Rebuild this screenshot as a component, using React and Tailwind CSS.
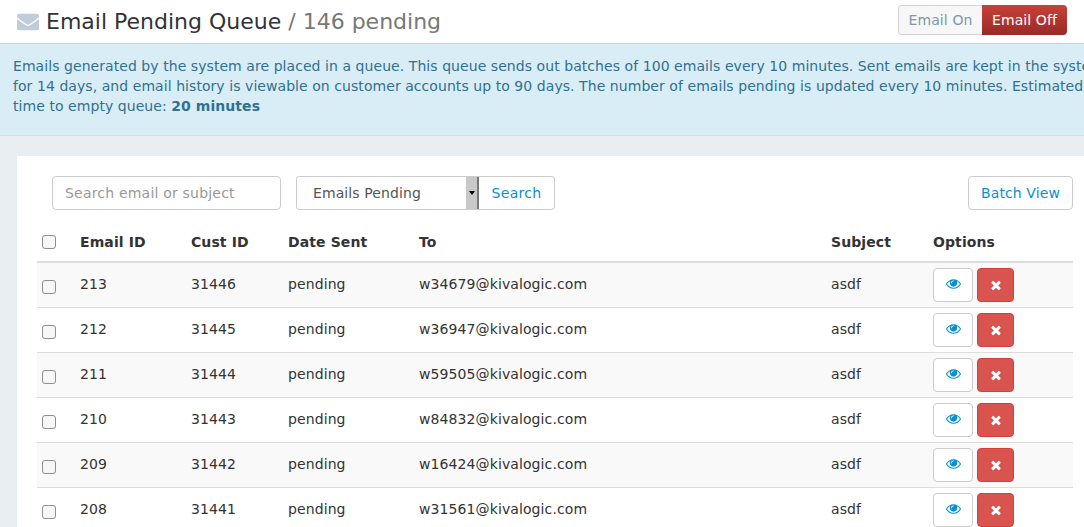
import React from 'react';
import { FaEnvelope } from 'react-icons/fa';

const emails = [
    { id: 213, cust: 31446, to: 'w34679@kivalogic.com' },
    { id: 212, cust: 31445, to: 'w36947@kivalogic.com' },
    { id: 211, cust: 31444, to: 'w59505@kivalogic.com' },
    { id: 210, cust: 31443, to: 'w84832@kivalogic.com' },
    { id: 209, cust: 31442, to: 'w16424@kivalogic.com' },
    { id: 208, cust: 31441, to: 'w31561@kivalogic.com' },
];

const Check = ({ className = '' }) => (
    <input type="checkbox" className={`block appearance-none w-[14px] h-[14px] rounded-[3px] border border-[#8f8f8f] bg-[#f7f7f7] ${className}`} />
);

const EyeIcon = () => (
    <svg viewBox="0 0 1792 1792" className="w-[15px] h-[15px] mb-[2px]" fill="currentColor">
        <path d="M1664 960q-152-236-381-353 61 104 61 225 0 185-131.5 316.5t-316.5 131.5-316.5-131.5-131.5-316.5q0-121 61-225-229 117-381 353 133 205 333.5 326.5t434.5 121.5 434.5-121.5 333.5-326.5zm-720-384q0-20-14-34t-34-14q-125 0-214.5 89.5t-89.5 214.5q0 20 14 34t34 14 34-14 14-34q0-86 61-147t147-61q20 0 34-14t14-34zm848 384q0 34-20 69-140 230-376.5 368.5t-499.5 138.5-499.5-139-376.5-368q-20-35-20-69t20-69q140-229 376.5-368t499.5-139 499.5 139 376.5 368q20 35 20 69z" />
    </svg>
);

const RemoveIcon = () => (
    <svg viewBox="0 0 1792 1792" className="w-[14px] h-[14px]" fill="currentColor">
        <path d="M1490 1322q0 40-28 68l-136 136q-28 28-68 28t-68-28l-294-294-294 294q-28 28-68 28t-68-28l-136-136q-28-28-28-68t28-68l294-294-294-294q-28-28-28-68t28-68l136-136q28-28 68-28t68 28l294 294 294-294q28-28 68-28t68 28l136 136q28 28 28 68t-28 68l-294 294 294 294q28 28 28 68z" />
    </svg>
);

const App = () => {
    return (
        <div className="h-[527px] w-[1084px] overflow-hidden bg-[#e9eef2] text-[14px] leading-[20px] tracking-[0.1px] text-[#333333] font-['DejaVu_Sans',sans-serif]">
            <header className="h-[44px] bg-white border-b border-[#b0dcea] flex items-center justify-between pl-[17px] pr-[17px]">
                <h1 className="flex items-center text-[22px] leading-[28px] font-normal tracking-normal">
                    <FaEnvelope className="w-[22px] h-[22px] text-[#c0ccd9] mr-[7px]" />
                    <span className="text-[#333333]">Email Pending Queue</span>
                    <span className="text-[#777777] ml-[7px]">/ 146 pending</span>
                </h1>
                <div className="flex h-[30px] mt-[-3px]">
                    <button className="w-[84px] rounded-l-[4px] border border-[#d4d4d4] border-r-0 bg-[#f7f7f7] text-[#7f96ad]">Email On</button>
                    <button className="w-[85px] rounded-r-[4px] bg-gradient-to-b from-[#c9403a] to-[#992a26] text-white">Email Off</button>
                </div>
            </header>

            <div className="h-[92px] overflow-hidden bg-[#d9edf7] border-b border-[#bce8f1] pt-[12px] pl-[13px] text-[#31708f]">
                <p className="w-[1100px] tracking-[0.06px]">
                    Emails generated by the system are placed in a queue. This queue sends out batches of 100 emails every 10 minutes. Sent emails are kept in the system for 14 days, and email history is viewable on customer accounts up to 90 days. The number of emails pending is updated every 10 minutes. Estimated time to empty queue: <strong className="font-bold">20 minutes</strong>
                </p>
            </div>

            <main className="mt-[20px] ml-[17px] bg-white pt-[20px] pl-[20px] pr-[11px]">
                <div className="flex items-center pl-[15px]">
                    <input
                        placeholder="Search email or subject"
                        className="w-[229px] h-[34px] px-[12px] rounded-[4px] border border-[#cccccc] outline-none tracking-[0.2px] placeholder:text-[#999999]"
                    />
                    <div className="flex ml-[15px] h-[34px]">
                        <div className="flex w-[183px] rounded-l-[4px] border border-[#cccccc] border-r-0 overflow-hidden">
                            <select className="flex-1 min-w-0 appearance-none bg-white pl-[16px] text-[#555555] outline-none">
                                <option>Emails Pending</option>
                                <option>Emails Sent</option>
                            </select>
                            <span className="w-[13px] bg-[#c8c8c8] border-r-2 border-[#777777] flex items-center justify-center">
                                <span className="border-x-[3px] border-x-transparent border-t-[4px] border-t-black" />
                            </span>
                        </div>
                        <button className="w-[76px] rounded-r-[4px] border border-[#cccccc] border-l-0 bg-white text-[#0a8fd0] tracking-[0.3px]">Search</button>
                    </div>
                    <button className="ml-auto w-[105px] h-[34px] rounded-[4px] border border-[#cccccc] bg-white text-[#0a8fd0]">Batch View</button>
                </div>

                <table className="w-[1036px] mt-[10px] table-fixed border-collapse">
                    <colgroup>
                        <col className="w-[43px]" />
                        <col className="w-[111px]" />
                        <col className="w-[97px]" />
                        <col className="w-[131px]" />
                        <col className="w-[412px]" />
                        <col className="w-[102px]" />
                        <col />
                    </colgroup>
                    <thead>
                        <tr className="h-[42px] border-b-2 border-[#dddddd] text-left font-bold">
                            <th className="pl-[5px] pt-[2px]"><Check /></th>
                            <th className="pt-[2px]">Email ID</th>
                            <th className="pt-[2px]">Cust ID</th>
                            <th className="pt-[2px]">Date Sent</th>
                            <th className="pt-[2px]">To</th>
                            <th className="pt-[2px]">Subject</th>
                            <th className="pt-[2px]">Options</th>
                        </tr>
                    </thead>
                    <tbody>
                        {emails.map((row) => (
                            <tr key={row.id} className="h-[45px] border-b border-[#dddddd] odd:bg-[#f9f9f9]">
                                <td className="pl-[5px]"><Check className="mt-[4px]" /></td>
                                <td className="pb-[2px]">{row.id}</td>
                                <td className="pb-[2px]">{row.cust}</td>
                                <td className="pb-[2px]">pending</td>
                                <td className="pb-[2px]">{row.to}</td>
                                <td className="pb-[2px]">asdf</td>
                                <td>
                                    <div className="flex gap-[4px]">
                                        <button className="w-[40px] h-[34px] rounded-[4px] border border-[#cccccc] bg-white flex items-center justify-center text-[#0a8fd0]">
                                            <EyeIcon />
                                        </button>
                                        <button className="w-[37px] h-[34px] rounded-[4px] border border-[#d43f3a] bg-[#d9534f] flex items-center justify-center text-white">
                                            <RemoveIcon />
                                        </button>
                                    </div>
                                </td>
                            </tr>
                        ))}
                    </tbody>
                </table>
            </main>
        </div>
    );
};

export default App;
